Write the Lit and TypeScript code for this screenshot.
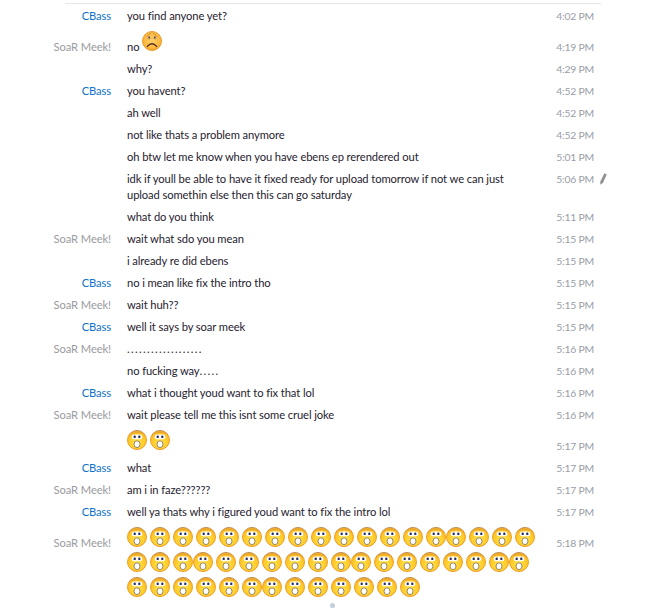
import { LitElement, html, css, svg } from "lit";
import { customElement } from "lit/decorators.js";

type Row = { n?: "c" | "s"; m?: string; d?: string; t: string; e?: boolean[]; sad?: boolean; pen?: boolean };

const C = "CBass";
const S = "SoaR Meek!";

const tightAt = (count: number, tight: number[]) =>
  Array.from({ length: count }, (_, i) => tight.includes(i));

const rows: Row[] = [
  { n: "c", m: "you find anyone yet?", t: "4:02 PM" },
  { n: "s", m: "no ", t: "4:19 PM", sad: true },
  { m: "why?", t: "4:29 PM" },
  { n: "c", m: "you havent?", t: "4:52 PM" },
  { m: "ah well", t: "4:52 PM" },
  { m: "not like thats a problem anymore", t: "4:52 PM" },
  { m: "oh btw let me know when you have ebens ep rerendered out", t: "5:01 PM" },
  {
    m: "idk if youll be able to have it fixed ready for upload tomorrow if not we can just upload somethin else then this can go saturday",
    t: "5:06 PM",
    pen: true,
  },
  { m: "what do you think", t: "5:11 PM" },
  { n: "s", m: "wait what sdo you mean", t: "5:15 PM" },
  { m: "i already re did ebens", t: "5:15 PM" },
  { n: "c", m: "no i mean like fix the intro tho", t: "5:15 PM" },
  { n: "s", m: "wait huh??", t: "5:15 PM" },
  { n: "c", m: "well it says by soar meek", t: "5:15 PM" },
  { n: "s", d: "...................", t: "5:16 PM" },
  { m: "no fucking way", d: ".....", t: "5:16 PM" },
  { n: "c", m: "what i thought youd want to fix that lol", t: "5:16 PM" },
  { n: "s", m: "wait please tell me this isnt some cruel joke", t: "5:16 PM" },
  { e: tightAt(2, []), t: "5:17 PM" },
  { n: "c", m: "what", t: "5:17 PM" },
  { n: "s", m: "am i in faze??????", t: "5:17 PM" },
  { n: "c", m: "well ya thats why i figured youd want to fix the intro lol", t: "5:17 PM" },
  { n: "s", e: tightAt(49, [13, 20, 27, 34, 41]), t: "5:18 PM" },
];

const face = svg`
  <defs>
    <radialGradient id="fy" cx="50%" cy="62%" r="62%">
      <stop offset="0" stop-color="#ffe548"/>
      <stop offset=".65" stop-color="#ffcb2c"/>
      <stop offset="1" stop-color="#fba81c"/>
    </radialGradient>
    <radialGradient id="fo" cx="50%" cy="45%" r="62%">
      <stop offset="0" stop-color="#ffd06a"/>
      <stop offset=".65" stop-color="#fdb93f"/>
      <stop offset="1" stop-color="#f69a1f"/>
    </radialGradient>
    <linearGradient id="rim" x1="0" y1="0" x2="0" y2="1">
      <stop offset="0" stop-color="#b98a52"/>
      <stop offset=".4" stop-color="#eda32c"/>
      <stop offset="1" stop-color="#f09a1e"/>
    </linearGradient>
  </defs>`;

const wow = html`<svg class="emo" viewBox="0 0 20 20" aria-hidden="true">
  ${face}
  <circle cx="10" cy="10" r="9.5" fill="url(#fy)" stroke="url(#rim)" />
  <path d="M5.2 3.4Q10 1.2 14.8 3.4" fill="none" stroke="#c9923f" stroke-width=".8" opacity=".6" />
  <rect x="4.6" y="4.6" width="10.8" height="4.6" rx="2.3" fill="#fff" opacity=".95" />
  <rect x="6.6" y="5.6" width="2.2" height="2.5" rx=".9" fill="#232c66" />
  <rect x="11.2" y="5.6" width="2.2" height="2.5" rx=".9" fill="#232c66" />
  <ellipse cx="10" cy="14.2" rx="3" ry="3.4" fill="#fff" stroke="#8a7a5c" stroke-width=".9" />
</svg>`;

const sad = html`<svg class="emo" viewBox="0 0 20 20" aria-hidden="true">
  ${face}
  <circle cx="10" cy="10" r="9.5" fill="url(#fo)" stroke="#eb9c30" />
  <path d="M4.6 6 8.8 1.8M15.4 6 11.2 1.8" fill="none" stroke="#b98650" stroke-width=".9" />
  <path d="M5.2 7.6Q7 4.2 8.9 7.4Q7 8.6 5.2 7.6ZM11.1 7.4Q13 4.2 14.8 7.6Q13 8.6 11.1 7.4Z" fill="#ffecc4" stroke="#b0803f" stroke-width=".5" />
  <rect x="6.5" y="5.7" width="1.4" height="1.8" fill="#3e3340" />
  <rect x="12.1" y="5.7" width="1.4" height="1.8" fill="#3e3340" />
  <path d="M5.4 15.4Q10 10 14.6 15.4" fill="none" stroke="#4a2f22" stroke-width="1.4" stroke-linecap="round" />
</svg>`;

@customElement("app-root")
export class AppRoot extends LitElement {
  static styles = css`
    :host {
      display: block;
      width: 646px;
      font-family: Lato, "Liberation Sans", sans-serif;
      font-size: 11.2px;
      letter-spacing: -0.1px;
      line-height: 16px;
      color: #1f2230;
      background: #fff;
      padding-top: 3px;
      overflow: hidden;
    }
    .rule {
      height: 1px;
      margin: 0 45px 1px 65px;
      background: #e6e6e6;
    }
    .row {
      display: flex;
      align-items: baseline;
      padding: 3px 0;
    }
    .name {
      width: 111px;
      flex: none;
      text-align: right;
      white-space: nowrap;
    }
    .c {
      color: #0f72c8;
    }
    .s {
      color: #9a9a9f;
    }
    .msg {
      width: 411.2px;
      flex: none;
      margin-left: 16px;
    }
    .dots {
      letter-spacing: 1.35px;
    }
    .time {
      width: 38px;
      flex: none;
      margin-left: 17.8px;
      text-align: right;
      white-space: nowrap;
      font-size: 10.4px;
      letter-spacing: -0.2px;
      color: #9a9ca8;
    }
    .pen {
      width: 7px;
      height: 12px;
      flex: none;
      align-self: flex-start;
      margin: 2px 0 0 6px;
    }
    .emo {
      display: inline-block;
      width: 20px;
      height: 20px;
      margin: 1px 3px 0 0;
      vertical-align: baseline;
    }
    .gap0 .emo {
      margin-right: 0;
    }
    .dot {
      width: 5px;
      height: 5px;
      margin: -1px 0 0 330px;
      border-radius: 50%;
      background: #c3cedb;
    }
  `;

  private renderEmo(tight: boolean) {
    return html`<span class=${tight ? "gap0" : ""}>${wow}</span>`;
  }

  render() {
    return html`
      <div class="rule"></div>
      ${rows.map(
        (r) => html`<div class="row">
          <div class="name ${r.n ?? ""}">${r.n === "c" ? C : r.n === "s" ? S : ""}</div>
          <div class="msg">${r.m ?? ""}${r.d ? html`<span class="dots">${r.d}</span>` : ""}${r.sad ? sad : ""}${r.e ? r.e.map((t) => this.renderEmo(t)) : ""}</div>
          <div class="time">${r.t}</div>
          ${r.pen
            ? html`<svg class="pen" viewBox="0 0 7 12" aria-hidden="true">
                <path d="M4.4.3 6.8 1.4 3 9.8.3 11.8.3 8.6Z" fill="#929292" />
              </svg>`
            : ""}
        </div>`
      )}
      <div class="dot"></div>
    `;
  }
}
